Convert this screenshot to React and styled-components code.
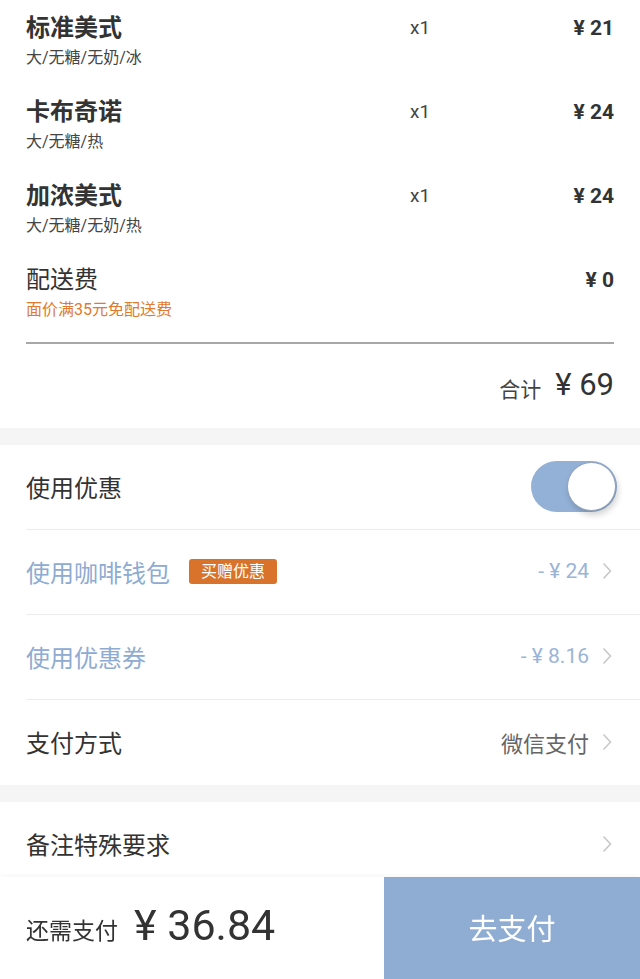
import React, { useState } from "react";
import styled, { createGlobalStyle } from "styled-components";

const GlobalStyle = createGlobalStyle`
  body {
    margin: 0;
    background: #fff;
    font-family: Roboto, "Noto Sans CJK SC", sans-serif;
    color: #333;
  }
`;

const Page = styled.div`
  width: 640px;
  padding-bottom: 102px;
`;

const OrderCard = styled.section`
  padding: 13px 26px 0;
`;

const ItemList = styled.div`
  display: flex;
  flex-direction: column;
  gap: 27px;
`;

const Item = styled.div`
  display: grid;
  grid-template-columns: 384px 1fr auto;
  grid-template-rows: 30px 24px;
  row-gap: 3px;
  align-items: center;
`;

const ItemName = styled.div`
  font-size: 24px;
  line-height: 30px;
  font-weight: ${(p) => (p.$bold ? 700 : 400)};
  color: #333;
`;

const ItemSub = styled.div`
  grid-column: 1 / -1;
  font-size: 16px;
  line-height: 24px;
  color: ${(p) => (p.$accent ? "#e07a2e" : "#444")};
`;

const Qty = styled.div`
  font-size: 19px;
  line-height: 30px;
  color: #444;
`;

const Price = styled.div`
  font-size: 21px;
  line-height: 30px;
  font-weight: 700;
  color: #333;
`;

const Divider = styled.hr`
  margin: 20px 0 0;
  border: 0;
  border-top: 2px solid #a8a8a8;
`;

const TotalRow = styled.div`
  height: 84px;
  padding-bottom: 3px;
  box-sizing: border-box;
  display: flex;
  align-items: center;
  justify-content: flex-end;
  gap: 14px;
  span {
    font-size: 21px;
    color: #444;
    padding-top: 6px;
  }
  strong {
    font-size: 31px;
    font-weight: 400;
    color: #333;
  }
`;

const Gap = styled.div`
  height: 17px;
  background: #f5f5f5;
`;

const Section = styled.section`
  padding-left: 26px;
`;

const Row = styled.div`
  height: 85px;
  display: flex;
  align-items: center;
  padding-right: 28px;
  padding-bottom: 2px;
  border-bottom: ${(p) => (p.$last ? "none" : "1px solid #ececec")};
  box-sizing: border-box;
`;

const Label = styled.div`
  font-size: 24px;
  color: ${(p) => (p.$blue ? "#8eabd2" : "#333")};
  flex: 1;
  display: flex;
  align-items: center;
`;

const Badge = styled.span`
  margin-left: 19px;
  height: 25px;
  padding: 0 12px;
  border-radius: 3px;
  background: #d9732b;
  color: #fff;
  font-size: 16px;
  line-height: 25px;
`;

const Value = styled.div`
  font-size: ${(p) => (p.$blue ? 21 : 22)}px;
  color: ${(p) => (p.$blue ? "#9ab4d8" : "#666")};
  margin-right: 13px;
`;

const Chevron = () => (
  <svg width="10" height="18" viewBox="0 0 10 18">
    <path d="M1.5 1.5 L8.5 9 L1.5 16.5" fill="none" stroke="#c8c8c8" strokeWidth="1.6" />
  </svg>
);

const Track = styled.button`
  width: 86px;
  height: 51px;
  margin-right: -5px;
  border: 0;
  padding: 0;
  border-radius: 26px;
  background: ${(p) => (p.$on ? "#93b1d7" : "#e5e5e5")};
  position: relative;
  cursor: pointer;
`;

const Knob = styled.span`
  position: absolute;
  top: 1px;
  left: ${(p) => (p.$on ? 36 : 1)}px;
  width: 49px;
  height: 49px;
  border-radius: 50%;
  background: #fff;
  box-sizing: border-box;
  border: 1px solid #8f9fb5;
  box-shadow: 2px 4px 6px rgba(0, 0, 0, 0.18);
`;

const BottomBar = styled.footer`
  position: fixed;
  left: 0;
  bottom: 0;
  width: 640px;
  height: 102px;
  display: flex;
  background: #fff;
  box-shadow: 0 -2px 4px rgba(0, 0, 0, 0.03);
`;

const Due = styled.div`
  flex: 1;
  display: flex;
  align-items: center;
  padding: 0 0 6px 26px;
  gap: 16px;
  span {
    font-size: 23px;
    color: #333;
    padding-top: 8px;
  }
  strong {
    font-size: 43px;
    font-weight: 400;
    color: #333;
  }
`;

const PayButton = styled.button`
  width: 256px;
  border: 0;
  padding-bottom: 4px;
  background: #8fadd3;
  color: #fff;
  font-family: inherit;
  font-size: 29px;
  cursor: pointer;
`;

const items = [
  { name: "标准美式", sub: "大/无糖/无奶/冰", qty: "x1", price: "¥ 21" },
  { name: "卡布奇诺", sub: "大/无糖/热", qty: "x1", price: "¥ 24" },
  { name: "加浓美式", sub: "大/无糖/无奶/热", qty: "x1", price: "¥ 24" },
];

export default function App() {
  const [useDiscount, setUseDiscount] = useState(true);
  return (
    <Page>
      <GlobalStyle />
      <OrderCard>
        <ItemList>
          {items.map((it, i) => (
            <Item key={i}>
              <ItemName $bold>{it.name}</ItemName>
              <Qty>{it.qty}</Qty>
              <Price>{it.price}</Price>
              <ItemSub>{it.sub}</ItemSub>
            </Item>
          ))}
          <Item>
            <ItemName>配送费</ItemName>
            <Qty />
            <Price>¥ 0</Price>
            <ItemSub $accent>面价满35元免配送费</ItemSub>
          </Item>
        </ItemList>
        <Divider />
        <TotalRow>
          <span>合计</span>
          <strong>¥ 69</strong>
        </TotalRow>
      </OrderCard>
      <Gap />
      <Section>
        <Row>
          <Label>使用优惠</Label>
          <Track $on={useDiscount} onClick={() => setUseDiscount(!useDiscount)}>
            <Knob $on={useDiscount} />
          </Track>
        </Row>
        <Row>
          <Label $blue>
            使用咖啡钱包<Badge>买赠优惠</Badge>
          </Label>
          <Value $blue>- ¥ 24</Value>
          <Chevron />
        </Row>
        <Row>
          <Label $blue>使用优惠券</Label>
          <Value $blue>- ¥ 8.16</Value>
          <Chevron />
        </Row>
        <Row $last>
          <Label>支付方式</Label>
          <Value>微信支付</Value>
          <Chevron />
        </Row>
      </Section>
      <Gap />
      <Section>
        <Row $last>
          <Label>备注特殊要求</Label>
          <Chevron />
        </Row>
      </Section>
      <BottomBar>
        <Due>
          <span>还需支付</span>
          <strong>¥ 36.84</strong>
        </Due>
        <PayButton>去支付</PayButton>
      </BottomBar>
    </Page>
  );
}
